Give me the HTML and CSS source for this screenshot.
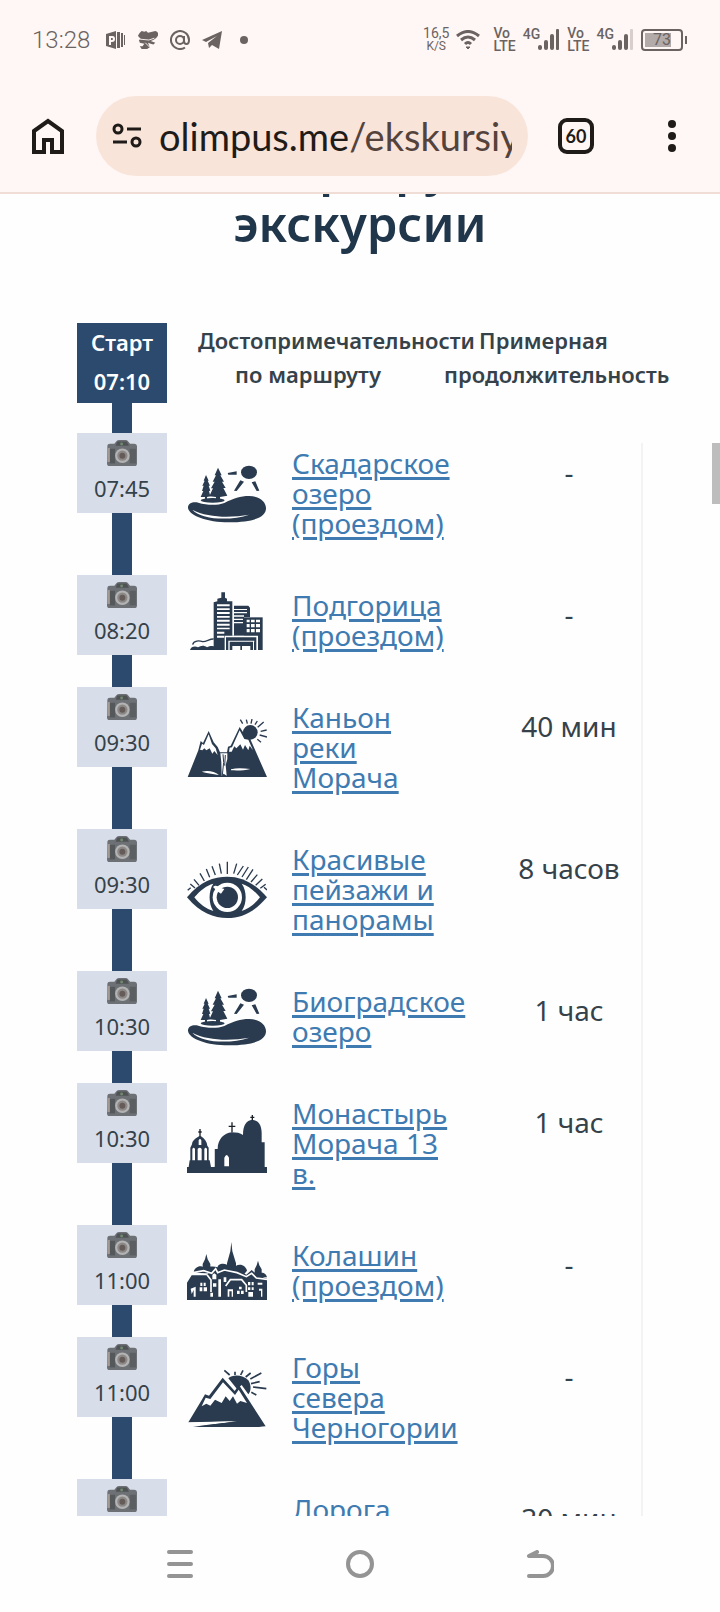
FILE: index.html
```html
<!DOCTYPE html>
<html lang="ru">
  <head>
    <meta charset="UTF-8" />
    <meta name="viewport" content="width=device-width, initial-scale=1" />
    <title>Маршрут экскурсии</title>
    <link rel="stylesheet" href="styles.css">
  </head>
  <body>
    <!-- Icon sprites -->
    <svg class="sprites" aria-hidden="true">
      <symbol id="camera" viewBox="4 0 82 71">
        <path d="M5 16 Q5 10 12 10 L24 10 L31 2 Q33 0 37 0 L55 0 Q59 0 61 3 L67 10 L78 10 Q86 10 86 18 L86 64 Q86 71 79 71 L11 71 Q4 71 4 64Z" fill="#6d7074"/>
        <path d="M32 4 L58 4 L64 16 L28 16Z" fill="#505356"/>
        <rect x="5" y="22" width="7" height="38" fill="#a39a94"/>
        <rect x="12" y="24" width="14" height="40" fill="#55585b"/>
        <rect x="66" y="24" width="17" height="40" fill="#5c5f62"/>
        <circle cx="44" cy="11" r="4" fill="#6f8a6c"/>
        <circle cx="46" cy="43" r="20" fill="#b3b3b3"/>
        <circle cx="46" cy="43" r="14" fill="#8b8887"/>
        <circle cx="46" cy="43" r="8" fill="#655b58"/>
      </symbol>

      <symbol id="lake" viewBox="0 0 240 174">
        <path d="M3 128C3 114 18 110 34 113C60 121 90 122 112 114C140 100 160 93 186 93C218 93 237 110 237 130C237 155 205 172 125 172C60 172 5 152 3 128Z"/>
        <path d="M16 134C45 165 130 168 187 149C130 159 60 158 16 134Z" fill="#fff"/>
        <ellipse cx="77" cy="106" rx="36" ry="7"/>
        <path d="M93 8L104 31L100 31L111 50L105 50L116 69L109 69L121 92L99 96V104H87V96L67 94L78 70L72 70L83 50L77 50L87 31L83 31Z"/>
        <path d="M57 30L65 47L62 47L69 62L65 62L70 77L66 78L70 94L60 96V104H54V96L41 96L49 78L45 78L50 62L46 62L53 47L50 47Z"/>
        <ellipse cx="186" cy="22" rx="24" ry="20"/>
        <path d="M122 24L149 19V29L124 29ZM160 46L171 50L149 78L141 77ZM194 52L205 49L217 77L209 78Z"/>
      </symbol>

      <symbol id="city" viewBox="0 0 240 174">
        <path d="M103 1H114V17L120 20V28H136V174H80V31L91 28V20L103 17Z"/>
        <path d="M90 37H128V43H90ZM90 49H128V54H90ZM90 60H128V66H90ZM90 72H128V77H90ZM90 83H128V89H90ZM90 95H128V101H90ZM90 107H128V112H90ZM90 119H112V125H90ZM90 131H112V137H90Z" fill="#fff"/>
        <path d="M141 41H184L189 47V75H171V131H141Z"/>
        <path d="M141 51H180V54H141ZM141 60H180V64H141ZM141 70H171V74H141ZM141 80H168V84H141ZM141 90H168V94H141Z" fill="#fff"/>
        <path d="M171 76H227V174H171Z"/>
        <path d="M179 83H188V91H179ZM192 83H203V91H192ZM207 83H219V91H207ZM179 96H188V106H179ZM192 96H203V106H192ZM207 96H219V106H207ZM179 111H188V121H179ZM192 111H203V121H192ZM207 111H219V121H207Z" fill="#fff"/>
        <path d="M113 131H212V174H113Z"/>
        <path d="M113 131H213V174H208V136H117V174H113ZM124 146H202V149H128V174H124ZM136 162H160V174H136ZM165 162H190V174H165ZM198 149H201V174H198Z" fill="#fff"/>
        <path d="M9 174C12 162 26 161 33 166C42 160 52 160 60 166C72 159 88 160 93 174Z"/>
        <path d="M17 158C20 144 38 146 47 149C58 150 68 140 80 141" fill="none" stroke="#2a3b4f" stroke-width="4"/>
      </symbol>

      <symbol id="canyon" viewBox="0 0 240 174">
        <circle cx="190" cy="40" r="22"/>
        <path d="M160 2L167 14M178 2L181 14M195 0L192 14M211 6L204 17M230 9L212 25M221 37L239 33M218 48L240 54M211 61L222 70" fill="none" stroke="#2a3b4f" stroke-width="4"/>
        <path d="M2 174L34 94L41 66L48 72L65 36L80 70L92 84L99 100H120L123 83L131 80L158 24L180 58L187 54L240 174Z"/>
        <path d="M39 92L45 74L51 78L65 46L75 75L86 88L92 108L82 96L76 104L68 88L58 94L52 88L46 94ZM126 98L128 86L135 85L158 34L172 60L184 62L198 94L188 80L184 94L174 78L168 92L160 76L148 88L142 82L134 98ZM100 103H121V120L116 138L119 170L110 164L104 170L103 130ZM44 158C62 154 82 156 96 168C76 164 58 163 44 158ZM132 151C150 146 170 148 190 150C170 155 150 155 132 154Z" fill="#fff" stroke="none"/>
        <path d="M108 106L110 130L106 168M115 108L113 140" fill="none" stroke="#2a3b4f" stroke-width="3"/>
      </symbol>

      <symbol id="eye" viewBox="0 0 240 174">
        <path d="M0 109C40 60 80 47 121 47C165 47 202 66 240 109C202 153 165 171 121 171C80 171 40 157 0 109Z"/>
        <path d="M22 109C40 88 58 74 79 68C64 88 64 130 79 150C58 144 38 130 22 109ZM219 109C202 88 184 75 164 68C180 88 180 130 164 150C184 144 203 130 219 109Z" fill="#fff"/>
        <circle cx="121" cy="109" r="44" fill="#fff"/>
        <circle cx="121" cy="109" r="32"/>
        <path d="M78 78C88 68 98 80 112 84L102 98L91 91Z" fill="#fff"/>
        <path d="M2 88L11 80M10 69L24 81M21 55L36 73M39 37L52 60M58 24L68 49M75 16L85 42M97 8L103 38M121 2V39M149 8L140 38M169 15L151 42M184 18L165 48M198 25L178 56M211 41L192 63M226 54L206 73M236 70L220 82M240 87L231 79" fill="none" stroke="#2a3b4f" stroke-width="4"/>
      </symbol>

      <symbol id="church" viewBox="0 0 240 174">
        <path d="M0 174V156H5L8 136H10V98L15 88C16 76 27 70 36 64H42C52 70 60 80 61 92L65 98V136H68L72 156H83V102H92C92 72 112 54 134 52C148 52 160 54 168 60C168 30 178 16 196 14C214 16 224 30 224 54V82H233V156H240V174Z"/>
        <path d="M135 22V52M125 34H145M196 0V16M190 7H202M39 42V66M34 51H44" fill="none" stroke="#1a2028" stroke-width="4"/>
        <path d="M16 102Q20 94 24 102V136H16ZM32 102Q38 94 44 102V136H32ZM52 102Q56 94 60 102V136H52ZM35 76Q39 68 43 76V90H35ZM112 154V128Q119 112 126 128V154ZM72 96H82V154H76Z" fill="#fff"/>
      </symbol>

      <symbol id="town" viewBox="0 0 240 174">
        <path d="M133 0L136 28L147 64V90H120V64L130 28ZM58 36L62 52L70 66V84H47V66L54 52ZM213 56L217 70L224 82V100H203V82L209 70ZM20 92C20 80 34 70 46 74C58 70 80 74 92 76C92 66 108 62 120 68L146 72C160 62 178 72 180 86L170 98ZM194 98C200 88 236 84 240 106H200Z"/>
        <path d="M0 174V122L14 100H58L76 84L88 92V80L112 78L120 92L150 82L178 98L194 84L212 100L240 110V174Z"/>
        <path d="M18 92L50 86L74 94L86 80L92 92L112 84L150 92L178 104L194 94L208 108L240 112M60 98L72 114V150M116 132L130 113H164L178 130V150" fill="none" stroke="#fff" stroke-width="5"/>
        <path d="M11 140L26 134V164H20V144L14 156ZM40 122H46V132H40ZM50 122H56V132H50ZM38 136H46V148H38ZM50 136H60V148H50ZM76 98L82 94L88 98V112H76ZM78 124H88V134H78ZM94 112H102V164H94ZM110 106H118V120H110ZM122 142H138V164H134V148H127V164H122ZM156 134H164V142H156ZM150 146H158V156H150ZM162 146H170V156H162ZM183 120H190V130H183ZM194 120H200V130H194ZM183 136H190V144H183ZM194 136H200V144H194ZM184 150H198V164H184ZM216 140H226V164H222V146H216ZM212 122H226V128H212ZM70 152H78V164H70Z" fill="#fff"/>
      </symbol>

      <symbol id="mountain" viewBox="0 0 240 174">
        <path d="M124 28C138 14 170 18 184 34C194 50 192 68 184 76L164 48L150 60Z"/>
        <path d="M112 4L128 18M144 8V18M168 4L161 18M191 12L176 24M223 12L190 30M192 44L218 38M198 54L238 59M193 70L208 78" fill="none" stroke="#2a3b4f" stroke-width="5"/>
        <path d="M107 26L143 66L156 48L236 172L120 170L60 168L150 157L4 160L46 90L54 76L66 80Z"/>
        <path d="M108 40L144 78L155 62L180 102L160 96L150 104L138 82L128 96L116 82L104 102L84 92L70 110L58 104L44 112L56 86L70 90Z" fill="#fff"/>
        <path d="M4 161L140 157L60 168H26Z" fill="#fff"/>
        <path d="M18 174C60 166 110 162 152 158C180 164 214 170 236 174Z"/>
      </symbol>

      <symbol id="bars" viewBox="0 0 22 24">
        <rect x="0" y="17" width="4" height="5" rx="2"/>
        <rect x="6" y="12" width="4" height="10" rx="2"/>
        <rect x="12" y="6" width="4" height="16" rx="2"/>
      </symbol>
    </svg>

    <!-- Phone status -->
    <div class="status-bar">
      <span class="clock">13:28</span>
      <svg class="status-icon" viewBox="0 0 20 20">
        <path d="M0 4L10 1V19L0 16ZM11 2H14V18H11ZM15 3H17V17H15ZM18 5H19V15H18Z"/>
        <path d="M3 15V6H6.500Q9 6 9 9T6 12H5V15Z" fill="#fff7f5"/>
        <path d="M5 8H6.500Q7.500 9 6.500 10H5Z"/>
      </svg>
      <svg class="status-icon" viewBox="0 0 22 20">
        <path d="M0 5L2 2L4 0L7 1L9 0L11 2L19 0Q23 1 22 5Q20 9 14 11L19 13L17 15L14 14L11 13L13 18L10 20H4L2 17L5 17L7 14L2 13L1 10L3 8L1 7Z"/>
        <path d="M1 9L12 10L18 8M8 13L13 18" fill="none" stroke="#fff7f5"/>
      </svg>
      <svg class="status-icon" viewBox="0 0 20 20" fill="none" stroke="#6b6361" stroke-width="2">
        <circle cx="10" cy="10" r="4" fill="none"/>
        <path d="M14 6V11Q14 14 16.500 14T19 10A9 9 0 1 0 15 17.500" fill="none"/>
      </svg>
      <svg class="status-icon" viewBox="0 0 20 20">
        <path d="M0 10L20 1L17 19L10 15L7 18L6 13L15 6L4 12Z"/>
      </svg>
      <svg class="status-icon" viewBox="0 0 20 20"><circle cx="10" cy="10" r="4"/></svg>

      <div class="status-right">
        <div class="speed"><span>16,5</span><small>K/S</small></div>
        <svg class="wifi" viewBox="0 0 24 20" fill="none" stroke="#6b6361" stroke-width="3">
          <path d="M1 6Q12 -3 23 6M5 10Q12 4 19 10M9 14Q12 11 15 14"/>
          <path d="M10 17H14L12 19Z" fill="#6b6361" stroke-width="1"/>
        </svg>
        <div class="lte"><span>Vo</span><span>LTE</span></div>
        <div class="signal">
          <span>4G</span>
          <svg viewBox="0 0 22 24"><use href="#bars"/><rect x="18" y="1" width="3" height="21" rx="1"/></svg>
        </div>
        <div class="lte"><span>Vo</span><span>LTE</span></div>
        <div class="signal">
          <span>4G</span>
          <svg viewBox="0 0 22 24"><use href="#bars"/><rect x="18" y="1" width="3" height="21" rx="1" fill="#d8cfcc"/></svg>
        </div>
        <div class="battery"><span>73</span></div>
      </div>
    </div>

    <!-- Browser toolbar -->
    <header class="toolbar">
      <button class="icon-button" aria-label="Домой">
        <svg width="32" height="36" viewBox="0 0 32 36" fill="none" stroke="#1f1b18" stroke-width="4">
          <path d="M2 13L16 3L30 13V34H20V22H12V34H2Z"/>
        </svg>
      </button>
      <button class="address">
        <svg width="30" height="26" viewBox="0 0 30 26" fill="none" stroke="#1f1b18" stroke-width="3">
          <circle cx="6" cy="6" r="4"/>
          <path d="M15 6H29M1 19H15"/>
          <circle cx="24" cy="19" r="4"/>
        </svg>
        <span class="url"><span>olimpus.me</span><span class="path">/ekskursiy</span></span>
      </button>
      <button class="tabs">60</button>
      <button class="icon-button" aria-label="Меню">
        <svg width="8" height="32" viewBox="0 0 8 32" fill="#1f1b18">
          <circle cx="4" cy="4" r="4"/><circle cx="4" cy="16" r="4"/><circle cx="4" cy="28" r="4"/>
        </svg>
      </button>
    </header>

    <main>
      <h2>Маршрут экскурсии</h2>

      <div class="route">
        <div class="route-head">
          <div class="start"><span>Старт</span><span>07:10</span></div>
          <div class="head-place">Достопримечательности по маршруту</div>
          <div class="head-time">Примерная продолжительность</div>
        </div>

        <ol class="stops">
          <li class="stop">
            <div class="line"><div class="time"><svg><use href="#camera"/></svg>07:45</div></div>
            <svg class="pic"><use href="#lake"/></svg>
            <div class="name"><a href="#">Скадарское озеро (проездом)</a></div>
            <div class="duration">-</div>
          </li>
          <li class="stop">
            <div class="line"><div class="time"><svg><use href="#camera"/></svg>08:20</div></div>
            <svg class="pic"><use href="#city"/></svg>
            <div class="name"><a href="#">Подгорица (проездом)</a></div>
            <div class="duration">-</div>
          </li>
          <li class="stop">
            <div class="line"><div class="time"><svg><use href="#camera"/></svg>09:30</div></div>
            <svg class="pic"><use href="#canyon"/></svg>
            <div class="name"><a href="#">Каньон реки Морача</a></div>
            <div class="duration">40 мин</div>
          </li>
          <li class="stop">
            <div class="line"><div class="time"><svg><use href="#camera"/></svg>09:30</div></div>
            <svg class="pic"><use href="#eye"/></svg>
            <div class="name"><a href="#">Красивые пейзажи и панорамы</a></div>
            <div class="duration">8 часов</div>
          </li>
          <li class="stop">
            <div class="line"><div class="time"><svg><use href="#camera"/></svg>10:30</div></div>
            <svg class="pic"><use href="#lake"/></svg>
            <div class="name"><a href="#">Биоградское озеро</a></div>
            <div class="duration">1 час</div>
          </li>
          <li class="stop">
            <div class="line"><div class="time"><svg><use href="#camera"/></svg>10:30</div></div>
            <svg class="pic"><use href="#church"/></svg>
            <div class="name"><a href="#">Монастырь Морача 13 в.</a></div>
            <div class="duration">1 час</div>
          </li>
          <li class="stop">
            <div class="line"><div class="time"><svg><use href="#camera"/></svg>11:00</div></div>
            <svg class="pic"><use href="#town"/></svg>
            <div class="name"><a href="#">Колашин (проездом)</a></div>
            <div class="duration">-</div>
          </li>
          <li class="stop">
            <div class="line"><div class="time"><svg><use href="#camera"/></svg>11:00</div></div>
            <svg class="pic"><use href="#mountain"/></svg>
            <div class="name"><a href="#">Горы севера Черногории</a></div>
            <div class="duration">-</div>
          </li>
          <li class="stop">
            <div class="line"><div class="time"><svg><use href="#camera"/></svg></div></div>
            <span class="pic"></span>
            <div class="name"><a href="#">Дорога</a></div>
            <div class="duration">30 мин</div>
          </li>
        </ol>
      </div>
      <div class="scroll-thumb"></div>
    </main>

    <!-- Phone navigation -->
    <nav class="phone-nav">
      <button aria-label="Недавние">
        <svg width="28" height="28" viewBox="0 0 28 28"><path d="M3 2H25M3 14H25M3 26H25"/></svg>
      </button>
      <button aria-label="Главный экран">
        <svg width="28" height="28" viewBox="0 0 28 28"><circle cx="14" cy="14" r="12"/></svg>
      </button>
      <button aria-label="Назад">
        <svg width="28" height="28" viewBox="0 0 28 28"><path d="M11 2L3 6H17A10 10 0 0 1 17 26H3"/></svg>
      </button>
    </nav>
  </body>
</html>
```
FILE: styles.css
```css
* {
  box-sizing: border-box;
}

body {
  margin: 0;
  height: 100vh;
  display: flex;
  flex-direction: column;
  overflow: hidden;
  font-family: "Noto Sans", sans-serif;
  color: #36424a;
  background-color: #fefefe;
}

button {
  border: none;
  padding: 0;
  background: none;
  font: inherit;
  display: flex;
  align-items: center;
  justify-content: center;
  cursor: pointer;
}

.sprites {
  display: none;
}

/* Phone status */
.status-bar {
  height: 80px;
  flex: none;
  padding: 0 32px;
  display: flex;
  align-items: center;
  gap: 12px;
  background-color: #fff7f5;
  color: #6b6361;
  fill: #6b6361;
  font-family: Roboto, sans-serif;
}

.clock {
  font-size: 24px;
  font-weight: 300;
  margin-right: 4px;
}

.status-icon {
  width: 20px;
  height: 20px;
}

.status-right {
  margin-left: auto;
  display: flex;
  align-items: center;
  gap: 7px;
}

.speed,
.lte {
  display: flex;
  flex-direction: column;
  align-items: center;
  font-size: 14px;
  line-height: 13px;
}

.speed small {
  font-size: 12px;
}

.lte {
  align-items: flex-start;
  font-weight: 500;
}

.wifi {
  width: 24px;
  height: 20px;
  margin-right: 6px;
}

.signal {
  display: flex;
  align-items: flex-start;
  font-size: 14px;
  font-weight: 500;
  line-height: 13px;
}

.signal svg {
  width: 22px;
  height: 24px;
  margin-left: -2px;
}

.battery {
  position: relative;
  width: 42px;
  height: 22px;
  margin-right: 5px;
  border: 2px solid #6b6361;
  border-radius: 4px;
  background: linear-gradient(#b3abaa, #b3abaa) 2px 2px / 26px 14px no-repeat;
  font-size: 16px;
  line-height: 18px;
  text-align: center;
}

.battery::after {
  content: "";
  position: absolute;
  right: -6px;
  top: 5px;
  width: 2px;
  height: 8px;
  background-color: #6b6361;
}

/* Browser toolbar */
.toolbar {
  height: 114px;
  flex: none;
  display: flex;
  align-items: center;
  border-bottom: 2px solid #f0ddd5;
  background-color: #fff7f5;
}

.icon-button {
  width: 96px;
  height: 80px;
}

.address {
  flex: 1;
  min-width: 0;
  height: 80px;
  padding: 0 16px;
  gap: 17px;
  justify-content: flex-start;
  border-radius: 40px;
  background-color: #f9e4da;
}

.address svg {
  flex: none;
}

.url {
  flex: 1;
  display: flex;
  overflow: hidden;
  white-space: nowrap;
  font-family: Lato, sans-serif;
  font-size: 38px;
  color: #1f1b18;
}

.path {
  color: #53433c;
}

.tabs {
  width: 36px;
  height: 36px;
  margin: 0 30px;
  border: 4px solid #1f1b18;
  border-radius: 9px;
  font-family: Lato, sans-serif;
  font-size: 18px;
  font-weight: 700;
  color: #1f1b18;
}

/* Page */
main {
  position: relative;
  flex: 1;
  min-height: 0;
  overflow: hidden;
}

h2 {
  max-width: 300px;
  margin: -56px auto 71px;
  font-size: 49px;
  font-weight: 600;
  line-height: 57px;
  text-align: center;
  color: #20364b;
}

.route {
  margin: 0 77px;
}

.route-head {
  display: flex;
  font-size: 22px;
  font-weight: 600;
  line-height: 34px;
  text-align: center;
}

.start {
  width: 90px;
  height: 80px;
  display: flex;
  flex-direction: column;
  line-height: 39px;
  color: #fff;
  background-color: #2b4a6d;
}

.head-place {
  width: 220px;
  margin: 0 26px 0 31px;
}

.head-time {
  flex: 1;
  min-width: 0;
}

.stops {
  list-style: none;
  margin: 0;
  padding: 0;
}

/* short piece of the line between the start and the first stop */
.stops::before {
  content: "";
  display: block;
  width: 20px;
  height: 30px;
  margin-left: 35px;
  background-color: #2b4a6d;
}

.stop {
  display: grid;
  grid-template-columns: 90px 80px 160px 1fr;
  column-gap: 20px;
}

.line {
  display: flex;
  flex-direction: column;
  align-items: center;
}

.line::after {
  content: "";
  flex: 1;
  width: 20px;
  background-color: #2b4a6d;
}

.time {
  width: 90px;
  height: 80px;
  padding-top: 7px;
  font-size: 22px;
  line-height: 45px;
  text-align: center;
  background-color: #d7dee9;
}

.time svg {
  display: block;
  width: 30px;
  height: 26px;
  margin: 0 auto;
}

.pic {
  width: 80px;
  height: 58px;
  align-self: center;
  margin-bottom: 20px;
  fill: #2a3b4f;
}

.name {
  padding: 15px 0 37px 5px;
  font-size: 28px;
  line-height: 30px;
}

.name a {
  color: #3f7bb0;
  text-decoration-thickness: 3px;
  text-underline-offset: 3px;
}

.duration {
  padding: 20px 0 0 30px;
  border-right: 2px solid #f3f3f3;
  font-size: 28px;
  line-height: 38px;
  text-align: center;
}

.stop:first-child .duration {
  margin-top: 10px;
  padding-top: 10px;
}

.scroll-thumb {
  position: absolute;
  top: 249px;
  right: 0;
  width: 8px;
  height: 61px;
  background-color: #bdbdbd;
}

/* Phone navigation */
.phone-nav {
  height: 96px;
  flex: none;
  display: flex;
  padding: 0 90px;
  background-color: #fefefe;
}

.phone-nav button {
  flex: 1;
}

.phone-nav svg {
  fill: none;
  stroke: #949494;
  stroke-width: 4;
  stroke-linecap: round;
  stroke-linejoin: round;
}
```
